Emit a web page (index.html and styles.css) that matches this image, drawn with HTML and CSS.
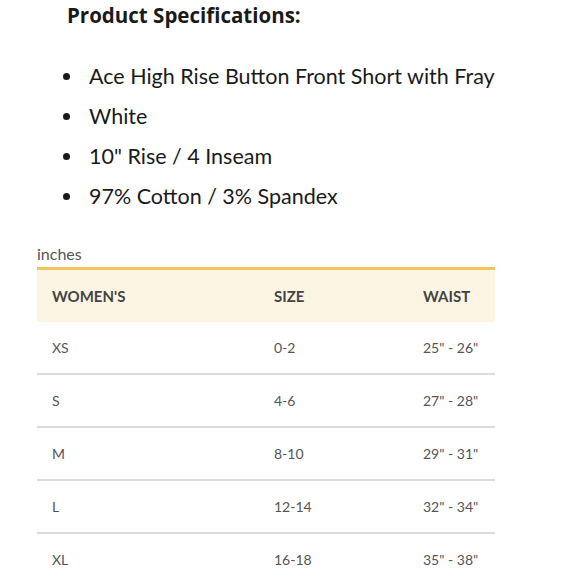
FILE: index.html
```html
<!DOCTYPE html>
<html>
<head>
<meta charset="utf-8">
<link rel="stylesheet" href="styles.css">
</head>
<body>
<div class="page">
  <h1 class="title">Product Specifications:</h1>
  <ul class="specs">
    <li>Ace High Rise Button Front Short with Fray</li>
    <li>White</li>
    <li>10" Rise / 4 Inseam</li>
    <li>97% Cotton / 3% Spandex</li>
  </ul>
  <div class="chart">
    <div class="unit">inches</div>
    <table class="sizes">
      <thead>
        <tr><th>WOMEN'S</th><th>SIZE</th><th>WAIST</th></tr>
      </thead>
      <tbody>
        <tr><td>XS</td><td>0-2</td><td>25" - 26"</td></tr>
        <tr><td>S</td><td>4-6</td><td>27" - 28"</td></tr>
        <tr><td>M</td><td>8-10</td><td>29" - 31"</td></tr>
        <tr><td>L</td><td>12-14</td><td>32" - 34"</td></tr>
        <tr><td>XL</td><td>16-18</td><td>35" - 38"</td></tr>
      </tbody>
    </table>
  </div>
</div>
</body>
</html>
```

FILE: styles.css
```css
html, body {
  margin: 0;
  padding: 0;
  background: #ffffff;
}
.page {
  width: 580px;
  height: 580px;
  overflow: hidden;
  font-family: Lato, "Open Sans", sans-serif;
}
.title {
  margin: 0;
  padding: 1px 0 0 67px;
  font-family: "Open Sans", Lato, sans-serif;
  font-size: 20.5px;
  font-weight: 700;
  color: #1a1a1a;
  line-height: 28px;
}
.specs {
  margin: 27px 0 0 0;
  padding: 0 0 0 89px;
  list-style: none;
  color: #1a1a1a;
  font-size: 21.5px;
  line-height: 40px;
}
.specs li {
  position: relative;
}
.specs li::before {
  content: "";
  position: absolute;
  left: -26px;
  top: 17px;
  width: 7px;
  height: 7px;
  border-radius: 50%;
  background: #1a1a1a;
}
.chart {
  margin: 28px 0 0 37px;
  width: 458px;
}
.unit {
  font-size: 16px;
  color: #555;
  line-height: 20px;
  padding-bottom: 3px;
}
.sizes {
  width: 100%;
  border-collapse: collapse;
  border-top: 3px solid #f2c45c;
}
.sizes th {
  background: #fdf5e4;
  text-align: left;
  font-size: 15px;
  font-weight: 700;
  color: #444;
  height: 52px;
  padding: 0;
}
.sizes td {
  font-size: 14px;
  color: #555;
  height: 51px;
  padding: 0;
  border-bottom: 2px solid #dcdcdc;
}
.sizes th:first-child, .sizes td:first-child { padding-left: 15px; width: 222px; }
.sizes th:nth-child(2), .sizes td:nth-child(2) { width: 149px; }
```
